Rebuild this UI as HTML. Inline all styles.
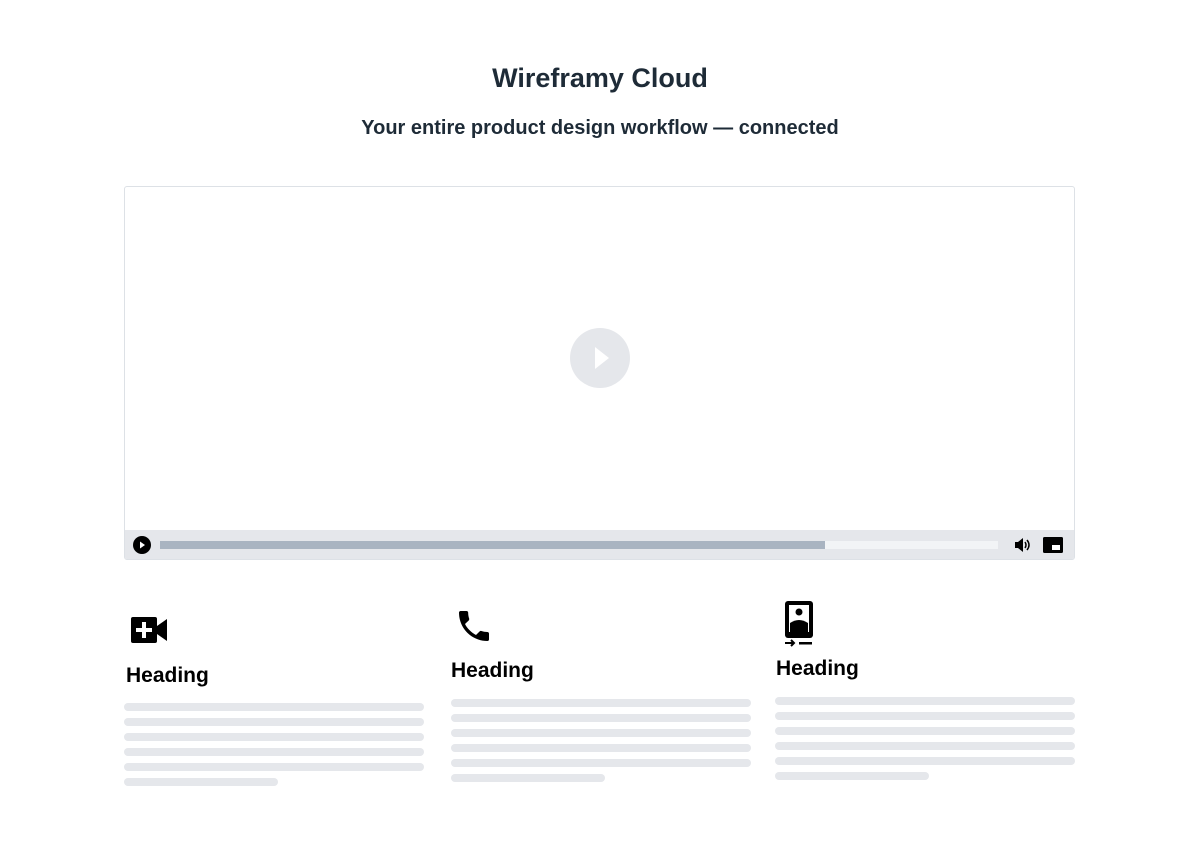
<!DOCTYPE html>
<html><head><style>
body{margin:0;background:#fff;font-family:"Liberation Sans",sans-serif;width:1200px;height:863px;position:relative;overflow:hidden}
.a{position:absolute}
h1{position:absolute;top:63px;left:0;width:1200px;text-align:center;margin:0;font-size:27px;color:#1e2b37;font-weight:bold}
h2{position:absolute;top:117px;left:0;width:1200px;text-align:center;margin:0;font-size:20px;color:#1e2b37;font-weight:bold}
.ln{position:absolute;height:8px;border-radius:4px;background:#e5e7eb}
.hd{position:absolute;font-size:21px;font-weight:bold;color:#000}
</style></head><body>
<h1>Wireframy Cloud</h1>
<h2>Your entire product design workflow — connected</h2>
<div class="a" style="left:124px;top:186px;width:949px;height:372px;border:1px solid #dde1e6;border-radius:3px;overflow:hidden">
 <div class="a" style="left:445px;top:141px;width:60px;height:60px;border-radius:50%;background:#e5e7eb"></div>
 <svg class="a" style="left:445px;top:141px" width="60" height="60"><path d="M25 19 L39 30 L25 41Z" fill="#fff"/></svg>
 <div class="a" style="left:0;top:343px;width:949px;height:29px;background:#e5e7eb"></div>
 <svg class="a" style="left:7px;top:348px" width="20" height="20"><circle cx="10" cy="10" r="9" fill="#000"/><path d="M8 6.5 L13 10 L8 13.5Z" fill="#fff"/></svg>
 <div class="a" style="left:35px;top:354px;width:838px;height:8px;background:#f2f4f6"></div>
 <div class="a" style="left:35px;top:354px;width:665px;height:8px;background:#a9b4c1"></div>
 <svg class="a" style="left:889px;top:350px" width="18" height="16"><path d="M1 5h3l5-4v14l-5-4H1z" fill="#000"/><path d="M11 5q2 3 0 6M13 3q4 5 0 10" stroke="#000" stroke-width="1.5" fill="none"/></svg>
 <svg class="a" style="left:918px;top:350px" width="20" height="16"><rect x="0" y="0" width="20" height="16" rx="1.5" fill="#000"/><rect x="9" y="8" width="8" height="5" fill="#fff"/></svg>
</div>
<svg class="a" style="left:131px;top:617px" width="37" height="26"><rect x="0" y="0" width="26" height="26" rx="2" fill="#000"/><path d="M26 9 L36 2 V24 L26 17Z" fill="#000"/><path d="M11 5h4v6h6v4h-6v6h-4v-6H5v-4h6z" fill="#fff"/></svg>
<svg class="a" style="left:454px;top:606px" width="40" height="40" viewBox="0 0 24 24"><path d="M6.6 10.8c1.4 2.8 3.8 5.1 6.6 6.6l2.2-2.2c.3-.3.7-.4 1-.2 1.1.4 2.3.6 3.6.6.6 0 1 .4 1 1V20c0 .6-.4 1-1 1C10.6 21 3 13.4 3 4c0-.6.4-1 1-1h3.5c.6 0 1 .4 1 1 0 1.3.2 2.5.6 3.6.1.3 0 .7-.2 1z" fill="#000"/></svg>
<svg class="a" style="left:784px;top:601px" width="30" height="47"><rect x="1" y="0" width="28" height="37" rx="3" fill="#000"/><rect x="5" y="4" width="20" height="27" fill="#fff"/><circle cx="15" cy="11" r="3.5" fill="#000"/><path d="M6 31 V22 q9-6 18 0 V31Z" fill="#000"/><path d="M1 42h9M7 39l3 3-3 3" stroke="#000" stroke-width="2" fill="none"/><rect x="15" y="41" width="13" height="2.5" fill="#000"/></svg>
<div class="hd" style="left:126px;top:664px">Heading</div>
<div class="hd" style="left:451px;top:659px">Heading</div>
<div class="hd" style="left:776px;top:657px">Heading</div>
<div class="ln" style="left:124px;top:703px;width:300px"></div>
<div class="ln" style="left:124px;top:718px;width:300px"></div>
<div class="ln" style="left:124px;top:733px;width:300px"></div>
<div class="ln" style="left:124px;top:748px;width:300px"></div>
<div class="ln" style="left:124px;top:763px;width:300px"></div>
<div class="ln" style="left:124px;top:778px;width:154px"></div>
<div class="ln" style="left:451px;top:699px;width:300px"></div>
<div class="ln" style="left:451px;top:714px;width:300px"></div>
<div class="ln" style="left:451px;top:729px;width:300px"></div>
<div class="ln" style="left:451px;top:744px;width:300px"></div>
<div class="ln" style="left:451px;top:759px;width:300px"></div>
<div class="ln" style="left:451px;top:774px;width:154px"></div>
<div class="ln" style="left:775px;top:697px;width:300px"></div>
<div class="ln" style="left:775px;top:712px;width:300px"></div>
<div class="ln" style="left:775px;top:727px;width:300px"></div>
<div class="ln" style="left:775px;top:742px;width:300px"></div>
<div class="ln" style="left:775px;top:757px;width:300px"></div>
<div class="ln" style="left:775px;top:772px;width:154px"></div>
</body></html>
